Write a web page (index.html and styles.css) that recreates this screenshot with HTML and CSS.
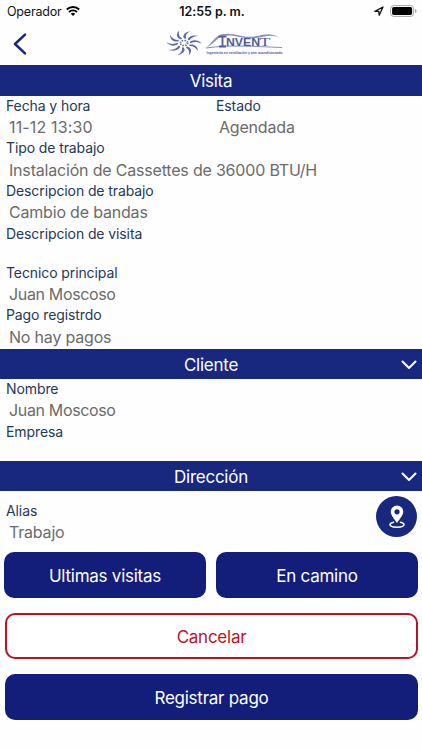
FILE: index.html
```html
<!DOCTYPE html>
<html lang="es">

<head>
    <meta charset="UTF-8" />
    <meta name="viewport" content="width=device-width, initial-scale=1" />
    <title>Visita</title>
    <link rel="stylesheet" href="styles.css">
</head>

<body>
    <div class="status">
        <div class="carrier">
            <span>Operador</span>
            <svg class="wifi" viewBox="0 0 14 10" width="14" height="10">
                <path d="M0.8 3.5a9 9 0 0 1 12.4 0M3 6a5.8 5.8 0 0 1 8 0" fill="none" stroke="#000" stroke-width="1.9" />
                <path d="M4.8 7.7a3.2 3.2 0 0 1 4.4 0L7 10z" />
            </svg>
        </div>
        <span class="time">12:55 p. m.</span>
        <div class="battery">
            <svg viewBox="0 0 10 10" width="10" height="10">
                <path d="M0.9 5.4L9 1L5.2 9.2L4.8 5.4z" fill="none" stroke="#111" stroke-width="1.3" stroke-linejoin="round" />
            </svg>
            <svg viewBox="0 0 27 12" width="27" height="12">
                <rect x="0.6" y="0.6" width="23" height="10.8" rx="3" fill="none" stroke="#a5a5a5" />
                <rect x="2.1" y="2.1" width="20" height="7.8" rx="1.6" />
                <path d="M25 4q1.6 0.6 1.6 2t-1.6 2z" fill="#a5a5a5" />
            </svg>
        </div>
    </div>

    <header class="header">
        <a class="back" href="#" aria-label="Volver">
            <svg viewBox="0 0 14 22" width="14" height="22">
                <path d="M12 1.6L2 11l10 9.4" fill="none" stroke="#18267f" stroke-width="2.5" stroke-linecap="round" stroke-linejoin="round" />
            </svg>
        </a>
        <svg class="logo" viewBox="0 0 124 36" width="124" height="36">
            <defs>
                <path id="blade" d="M0.5 -4.5C-1.5 -7 -0.5 -11.5 5 -13C2 -10.5 0.8 -8 1.8 -5z" />
            </defs>
            <g transform="translate(19 18) scale(1.28 0.92)" fill="#5d6aa8">
                <use href="#blade" />
                <use href="#blade" transform="rotate(36)" />
                <use href="#blade" transform="rotate(72)" />
                <use href="#blade" transform="rotate(108)" />
                <use href="#blade" transform="rotate(144)" />
                <use href="#blade" transform="rotate(180)" />
                <use href="#blade" transform="rotate(216)" />
                <use href="#blade" transform="rotate(252)" />
                <use href="#blade" transform="rotate(288)" />
                <use href="#blade" transform="rotate(324)" />
                <circle r="2.8" fill="none" stroke="#5d6aa8" stroke-width="1.6" stroke-dasharray="1.2 1" />
            </g>
            <path d="M41 23C48 17 50 11 57 9.3C70 6.5 76 14 92 11C99 9.2 107 7.5 113 12C105 9.5 100 11.4 94 12.6C79 15.5 70 8.5 58 11C52 12.5 50 18 41 23z" fill="#8590bd" />
            <path d="M41 23C66 19.5 88 21.5 117 22.5" fill="none" stroke="#8590bd" />
            <path d="M53.5 11.7h8M57.5 11.7v9.5M54 21.5h7" fill="none" stroke="#4d5b9c" stroke-width="1.8" />
            <text class="logo-name" x="61" y="21" textLength="34" lengthAdjust="spacingAndGlyphs">NVEN</text>
            <text class="logo-t" x="94.5" y="21" textLength="11" lengthAdjust="spacingAndGlyphs">T</text>
            <text class="logo-tag" x="41.5" y="29" textLength="76" lengthAdjust="spacingAndGlyphs">Ingeniería en ventilación y aire acondicionado</text>
        </svg>
    </header>

    <h2 class="section">Visita</h2>
    <div class="row">
        <div class="field">
            <div class="label">Fecha y hora</div>
            <div class="value date">11-12 13:30</div>
        </div>
        <div class="field">
            <div class="label">Estado</div>
            <div class="value">Agendada</div>
        </div>
    </div>
    <div class="field">
        <div class="label">Tipo de trabajo</div>
        <div class="value">Instalación de Cassettes de 36000 BTU/H</div>
    </div>
    <div class="field">
        <div class="label">Descripcion de trabajo</div>
        <div class="value">Cambio de bandas</div>
    </div>
    <div class="field">
        <div class="label">Descripcion de visita</div>
        <div class="value empty"></div>
    </div>
    <div class="field">
        <div class="label">Tecnico principal</div>
        <div class="value name">Juan Moscoso</div>
    </div>
    <div class="field">
        <div class="label">Pago registrdo</div>
        <div class="value">No hay pagos</div>
    </div>

    <h2 class="section section-client">Cliente
        <svg class="chevron" viewBox="0 0 16 10" width="16" height="10">
            <path d="M1.5 1.5L8 8l6.5-6.5" />
        </svg>
    </h2>
    <div class="field">
        <div class="label">Nombre</div>
        <div class="value name">Juan Moscoso</div>
    </div>
    <div class="field">
        <div class="label">Empresa</div>
        <div class="value empty"></div>
    </div>

    <h2 class="section section-address">Dirección
        <svg class="chevron" viewBox="0 0 16 10" width="16" height="10">
            <path d="M1.5 1.5L8 8l6.5-6.5" />
        </svg>
    </h2>
    <div class="address">
        <div class="field">
            <div class="label">Alias</div>
            <div class="value">Trabajo</div>
        </div>
        <a class="map" href="#" aria-label="Mapa">
            <svg viewBox="0 0 16 24" width="16" height="24">
                <path d="M8 0.5a6.2 6.2 0 0 0-6.2 6.2C1.8 10.5 5.5 14 8 18c2.5-4 6.2-7.5 6.2-11.3A6.2 6.2 0 0 0 8 0.5zM8 4.2a2.6 2.6 0 1 1 0 5.2a2.6 2.6 0 0 1 0-5.2z" fill="#fff" fill-rule="evenodd" />
                <path d="M4.6 17.2C2.5 17.6 1 18.4 1 19.5c0 1.6 3 2.7 7 2.7s7-1.1 7-2.7c0-1.1-1.5-1.9-3.6-2.3" fill="none" stroke="#fff" stroke-width="1.5" stroke-linecap="round" />
            </svg>
        </a>
    </div>

    <div class="actions">
        <button class="btn">Ultimas visitas</button>
        <button class="btn">En camino</button>
    </div>
    <button class="btn btn-wide btn-cancel">Cancelar</button>
    <button class="btn btn-wide">Registrar pago</button>
</body>

</html>
```
FILE: styles.css
```css
* {
    margin: 0;
    padding: 0;
    box-sizing: border-box;
}

body {
    width: 100%;
    height: 750px;
    overflow: hidden;
    background: #fefefe;
    font-family: Inter, "Liberation Sans", sans-serif;
}

svg {
    display: block;
}

/* status bar */
.status {
    display: grid;
    grid-template-columns: 1fr auto 1fr;
    align-items: center;
    height: 22px;
    padding: 0 5px 0 7px;
    font-size: 13px;
    color: #111;
}

.carrier {
    display: flex;
    align-items: center;
    gap: 5px;
    font-size: 12.5px;
    letter-spacing: -0.2px;
}

.time {
    font-size: 12.5px;
    font-weight: 600;
    letter-spacing: -0.05px;
}

.battery {
    display: flex;
    align-items: center;
    justify-content: flex-end;
    gap: 6px;
}

/* header */
.header {
    display: flex;
    align-items: center;
    height: 43.3px;
    padding-left: 13px;
}

.logo {
    margin: -2px 0 0 138px;
}

.logo-name,
.logo-t {
    font-family: "Liberation Sans", sans-serif;
    font-size: 11px;
    font-weight: bold;
    fill: #4d5b9c;
}

.logo-t {
    font-family: "Liberation Serif", serif;
    font-size: 13px;
    font-weight: normal;
}

.logo-tag {
    font-family: "Liberation Sans", sans-serif;
    font-size: 3.4px;
    font-weight: bold;
    fill: #4d5b9c;
}

/* sections */
.section {
    display: flex;
    align-items: center;
    justify-content: center;
    position: relative;
    height: 30.4px;
    padding-top: 2px;
    background: #18287f;
    color: #fff;
    font-size: 17px;
    font-weight: 400;
    letter-spacing: -0.25px;
}

.section-client {
    margin-top: 0.4px;
}

.section-address {
    margin-top: 0.3px;
}

.chevron {
    position: absolute;
    right: 5px;
    top: 11px;
    fill: none;
    stroke: #fff;
    stroke-width: 2;
    stroke-linecap: round;
    stroke-linejoin: round;
}

.row {
    display: grid;
    grid-template-columns: 210px 1fr;
}

.field {
    padding-left: 6px;
}

.label {
    height: 19.2px;
    line-height: 19.2px;
    font-size: 14px;
    letter-spacing: -0.1px;
    color: #253858;
}

.value {
    height: 23.6px;
    padding-left: 3px;
    line-height: 24.4px;
    font-size: 16px;
    letter-spacing: -0.19px;
    color: #6b6b6b;
}

.value.date {
    letter-spacing: 0.15px;
}

.value.name {
    letter-spacing: -0.35px;
}

.value.empty {
    height: 19.4px;
}

.address {
    display: flex;
    justify-content: space-between;
    height: 61px;
    padding: 5px 5px 0 0;
}

.address .field {
    padding-top: 5px;
}

.map {
    display: flex;
    align-items: center;
    justify-content: center;
    width: 41px;
    height: 41px;
    border-radius: 50%;
    background: #18287f;
}

/* buttons */
.actions {
    display: flex;
    gap: 10px;
    padding: 0 4px;
}

.btn {
    display: block;
    flex: 1;
    height: 46px;
    padding-top: 1px;
    border: none;
    border-radius: 10px;
    background: #131e7b;
    color: #fff;
    font-family: inherit;
    font-size: 17px;
    letter-spacing: -0.25px;
}

.btn-wide {
    width: 413px;
    margin: 15px 0 0 5px;
}

.btn-cancel {
    border: 2px solid #b81424;
    background: #fff;
    color: #b81424;
}
```
